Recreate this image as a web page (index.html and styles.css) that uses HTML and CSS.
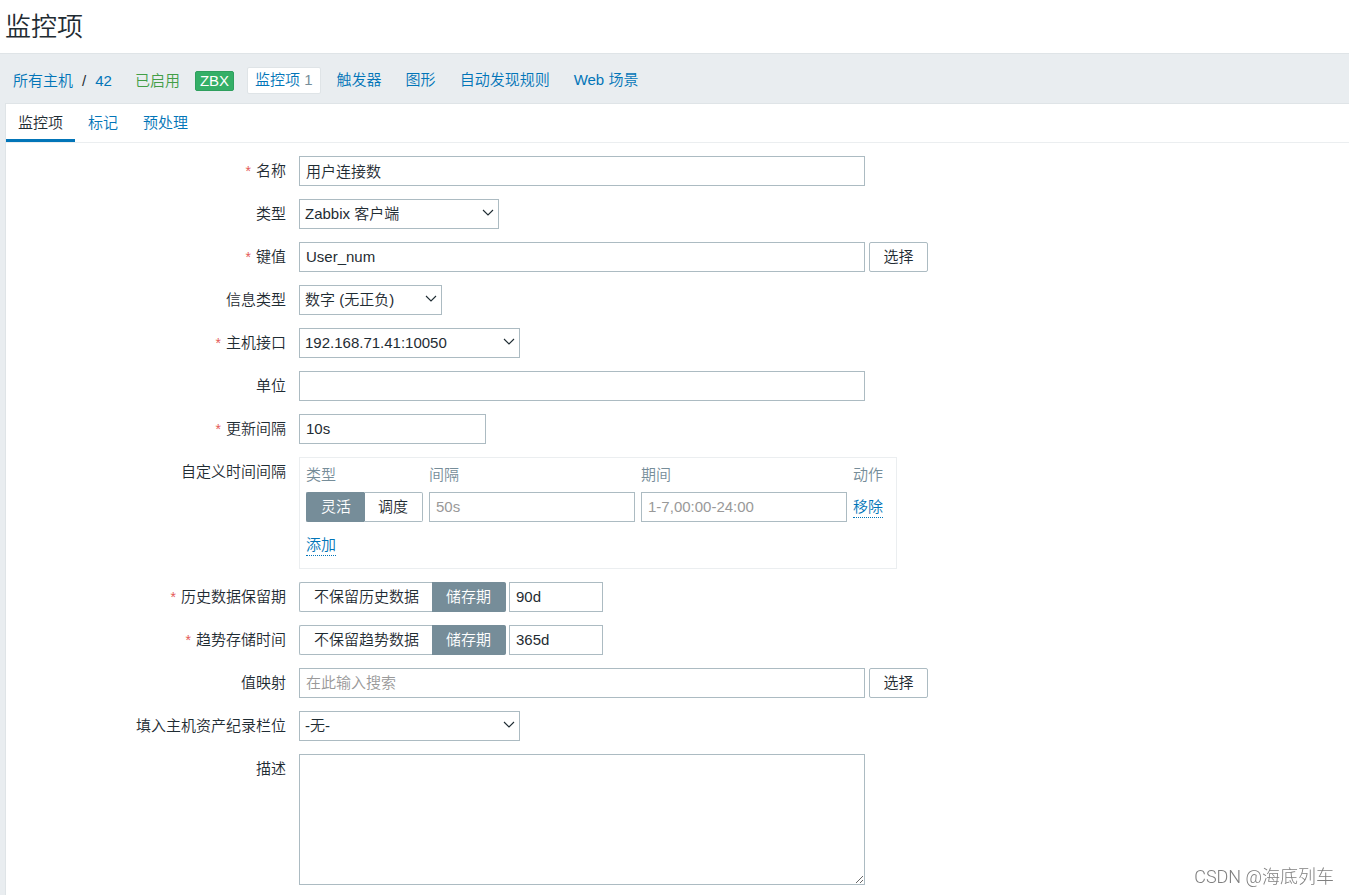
FILE: index.html
```html
<!DOCTYPE html>
<html lang="zh-CN">
<head>
<meta charset="utf-8">
<title>监控项</title>
<link rel="stylesheet" href="styles.css">
</head>
<body>
<header class="page-header"><h1 class="page-title">监控项</h1></header>
<nav class="host-nav">
  <div class="crumbs"><a href="#">所有主机</a><span class="slash">/</span><a href="#">42</a></div>
  <span class="status">已启用</span>
  <span class="badge">ZBX</span>
  <ul class="host-links">
    <li><a class="host-link selected" href="#">监控项 <span class="count">1</span></a></li>
    <li><a class="host-link" href="#">触发器</a></li>
    <li><a class="host-link" href="#">图形</a></li>
    <li><a class="host-link" href="#">自动发现规则</a></li>
    <li><a class="host-link" href="#">Web 场景</a></li>
  </ul>
</nav>
<main class="panel">
  <nav class="tabs">
    <a class="tab active" href="#">监控项</a>
    <a class="tab" href="#">标记</a>
    <a class="tab" href="#">预处理</a>
  </nav>
  <form class="form">
    <label class="label required" for="name">名称</label>
    <div class="field"><input class="input wide" id="name" type="text" value="用户连接数"></div>

    <label class="label" for="type">类型</label>
    <div class="field"><span class="select-wrap select-type"><select class="select" id="type"><option>Zabbix 客户端</option></select><svg class="chevron" viewBox="0 0 12 8" aria-hidden="true"><path d="M1 1l5 5 5-5"/></svg></span></div>

    <label class="label required" for="key">键值</label>
    <div class="field"><input class="input wide" id="key" type="text" value="User_num"><button class="button" type="button">选择</button></div>

    <label class="label" for="info">信息类型</label>
    <div class="field"><span class="select-wrap select-info"><select class="select" id="info"><option>数字 (无正负)</option></select><svg class="chevron" viewBox="0 0 12 8" aria-hidden="true"><path d="M1 1l5 5 5-5"/></svg></span></div>

    <label class="label required" for="iface">主机接口</label>
    <div class="field"><span class="select-wrap select-iface"><select class="select" id="iface"><option>192.168.71.41:10050</option></select><svg class="chevron" viewBox="0 0 12 8" aria-hidden="true"><path d="M1 1l5 5 5-5"/></svg></span></div>

    <label class="label" for="units">单位</label>
    <div class="field"><input class="input wide" id="units" type="text"></div>

    <label class="label required" for="delay">更新间隔</label>
    <div class="field"><input class="input medium" id="delay" type="text" value="10s"></div>

    <span class="label" id="custom-label">自定义时间间隔</span>
    <div class="field">
      <div class="interval-box">
        <table class="intervals" aria-labelledby="custom-label">
          <thead><tr><th>类型</th><th>间隔</th><th>期间</th><th>动作</th></tr></thead>
          <tbody><tr>
            <td><div class="segments" role="radiogroup" aria-label="类型">
              <input type="radio" name="kind" id="kind-flex" checked><label for="kind-flex">灵活</label><input type="radio" name="kind" id="kind-sched"><label for="kind-sched">调度</label>
            </div></td>
            <td><input class="input cell-input" type="text" placeholder="50s" aria-label="间隔"></td>
            <td><input class="input cell-input" type="text" placeholder="1-7,00:00-24:00" aria-label="期间"></td>
            <td><button class="link-button" type="button">移除</button></td>
          </tr></tbody>
          <tfoot><tr><td colspan="4"><button class="link-button" type="button">添加</button></td></tr></tfoot>
        </table>
      </div>
    </div>

    <label class="label required" for="history">历史数据保留期</label>
    <div class="field">
      <div class="segments" role="radiogroup" aria-label="历史数据保留期">
        <input type="radio" name="hist" id="hist-off"><label for="hist-off">不保留历史数据</label><input type="radio" name="hist" id="hist-on" checked><label for="hist-on">储存期</label>
      </div>
      <input class="input small" id="history" type="text" value="90d">
    </div>

    <label class="label required" for="trends">趋势存储时间</label>
    <div class="field">
      <div class="segments" role="radiogroup" aria-label="趋势存储时间">
        <input type="radio" name="trend" id="trend-off"><label for="trend-off">不保留趋势数据</label><input type="radio" name="trend" id="trend-on" checked><label for="trend-on">储存期</label>
      </div>
      <input class="input small" id="trends" type="text" value="365d">
    </div>

    <label class="label" for="map">值映射</label>
    <div class="field"><input class="input wide" id="map" type="text" placeholder="在此输入搜索"><button class="button" type="button">选择</button></div>

    <label class="label" for="inventory">填入主机资产纪录栏位</label>
    <div class="field"><span class="select-wrap select-iface"><select class="select" id="inventory"><option>-无-</option></select><svg class="chevron" viewBox="0 0 12 8" aria-hidden="true"><path d="M1 1l5 5 5-5"/></svg></span></div>

    <label class="label" for="desc">描述</label>
    <div class="field"><textarea class="input wide textarea" id="desc"></textarea></div>
  </form>
</main>
<div class="watermark">CSDN @海底列车</div>
</body>
</html>
```

FILE: styles.css
```css
* { box-sizing: border-box; }

body {
  margin: 0;
  min-height: 100vh;
  display: flex;
  flex-direction: column;
  background: #e9edf0;
  color: #1f2c33;
  font: 350 15px/20px "Liberation Sans", "Noto Sans CJK SC", sans-serif;
}

a { color: #0275b8; text-decoration: none; }
input, select, textarea, button { font: inherit; color: inherit; margin: 0; }

.page-header {
  background: #fff;
  border-bottom: 1px solid #dfe4e7;
  padding: 9px 5px 8px;
}
.page-title { margin: 0; font-size: 26px; line-height: 36px; font-weight: 350; }

.host-nav {
  display: flex;
  align-items: center;
  height: 49px;
  padding: 4px 13px 0;
}
.crumbs { display: flex; gap: 9px; margin-right: 23px; }
.slash { color: #1f2c33; }
.status { color: #429e47; margin-right: 15px; }
.badge {
  background: #34af67;
  border: 1px solid #2f9f5e;
  border-radius: 2px;
  color: #fff;
  line-height: 18px;
  padding: 0 4px;
  margin-right: 13px;
}
.host-links { display: flex; gap: 8px; list-style: none; margin: 0; padding: 0; }
.host-link {
  display: block;
  border: 1px solid transparent;
  border-radius: 2px;
  padding: 2px 7px 3px;
}
.host-link.selected { background: #fff; border-color: #dfe4e7; }
.count { color: #768d99; }

.panel {
  flex: 1;
  margin-left: 5px;
  background: #fff;
  border: 1px solid #dfe4e7;
  border-width: 1px 0 0 1px;
}
.tabs { display: flex; gap: 1px; border-bottom: 1px solid #ebeef0; }
.tab { padding: 9px 12px 6px; border-bottom: 3px solid transparent; }
.tab.active { color: #1f2c33; border-bottom-color: #0275b8; }

.form {
  display: grid;
  grid-template-columns: 280px minmax(0, 1fr);
  gap: 13px;
  padding: 13px 0 8px;
}
.label { text-align: right; padding-top: 5px; }
.required::before { content: "*"; color: #e45959; font-size: 14px; margin-right: 5px; }
.field { display: flex; align-items: flex-start; gap: 4px; }

.input, .select {
  height: 30px;
  border: 1px solid #acbbc2;
  border-radius: 0;
  background: #fff;
  padding: 0 6px;
  outline: 0;
}
.input { padding-bottom: 1px; }
.input::placeholder { color: #999; opacity: 1; }
.wide { width: 566px; }
.medium { width: 187px; }
.small { width: 94px; }
.textarea { height: 131px; padding: 4px 6px; resize: both; }

.select-wrap { display: grid; align-items: center; }
.select { appearance: none; width: 100%; grid-area: 1 / 1; padding: 0 5px; }
.chevron {
  grid-area: 1 / 1;
  justify-self: end;
  width: 12px;
  height: 8px;
  margin-right: 5px;
  margin-bottom: 3px;
  fill: none;
  stroke: #1f2c33;
  stroke-width: 1.1;
  pointer-events: none;
}
.select-type { width: 200px; }
.select-info { width: 143px; }
.select-iface { width: 221px; }

.button {
  height: 30px;
  border: 1px solid #acbbc2;
  border-radius: 2px;
  background: #fff;
  padding: 0 13px;
  width: 59px;
}

.segments { display: flex; margin-right: -1px; }
.segments input { position: absolute; opacity: 0; pointer-events: none; }
.segments label {
  height: 30px;
  line-height: 28px;
  padding: 0 14px;
  border: 1px solid #acbbc2;
}
.segments label:first-of-type { border-right: 0; border-radius: 2px 0 0 2px; }
.segments label:last-of-type { border-left: 0; border-radius: 0 2px 2px 0; margin-left: -1px; }
.segments input:checked + label { background: #768d99; border-color: #768d99; color: #fff; }

.interval-box { border: 1px solid #ebeef0; padding: 0 7px 0 6px; }
.intervals { border-collapse: collapse; }
.intervals th, .intervals td { padding: 0 6px 0 0; text-align: left; vertical-align: middle; }
.intervals th { height: 34px; font-weight: 350; color: #768d99; }
.intervals .segments { margin-right: 0; }
.intervals tfoot td { height: 46px; }
.cell-input { display: block; width: 206px; }
.link-button {
  display: block;
  padding: 0;
  border: 0;
  border-bottom: 1px dotted #0275b8;
  background: none;
  color: #0275b8;
}

.watermark {
  position: fixed;
  right: 15px;
  bottom: 6px;
  font: 300 18px/24px Roboto, "Noto Sans CJK SC", sans-serif;
  color: #808080;
}
```
